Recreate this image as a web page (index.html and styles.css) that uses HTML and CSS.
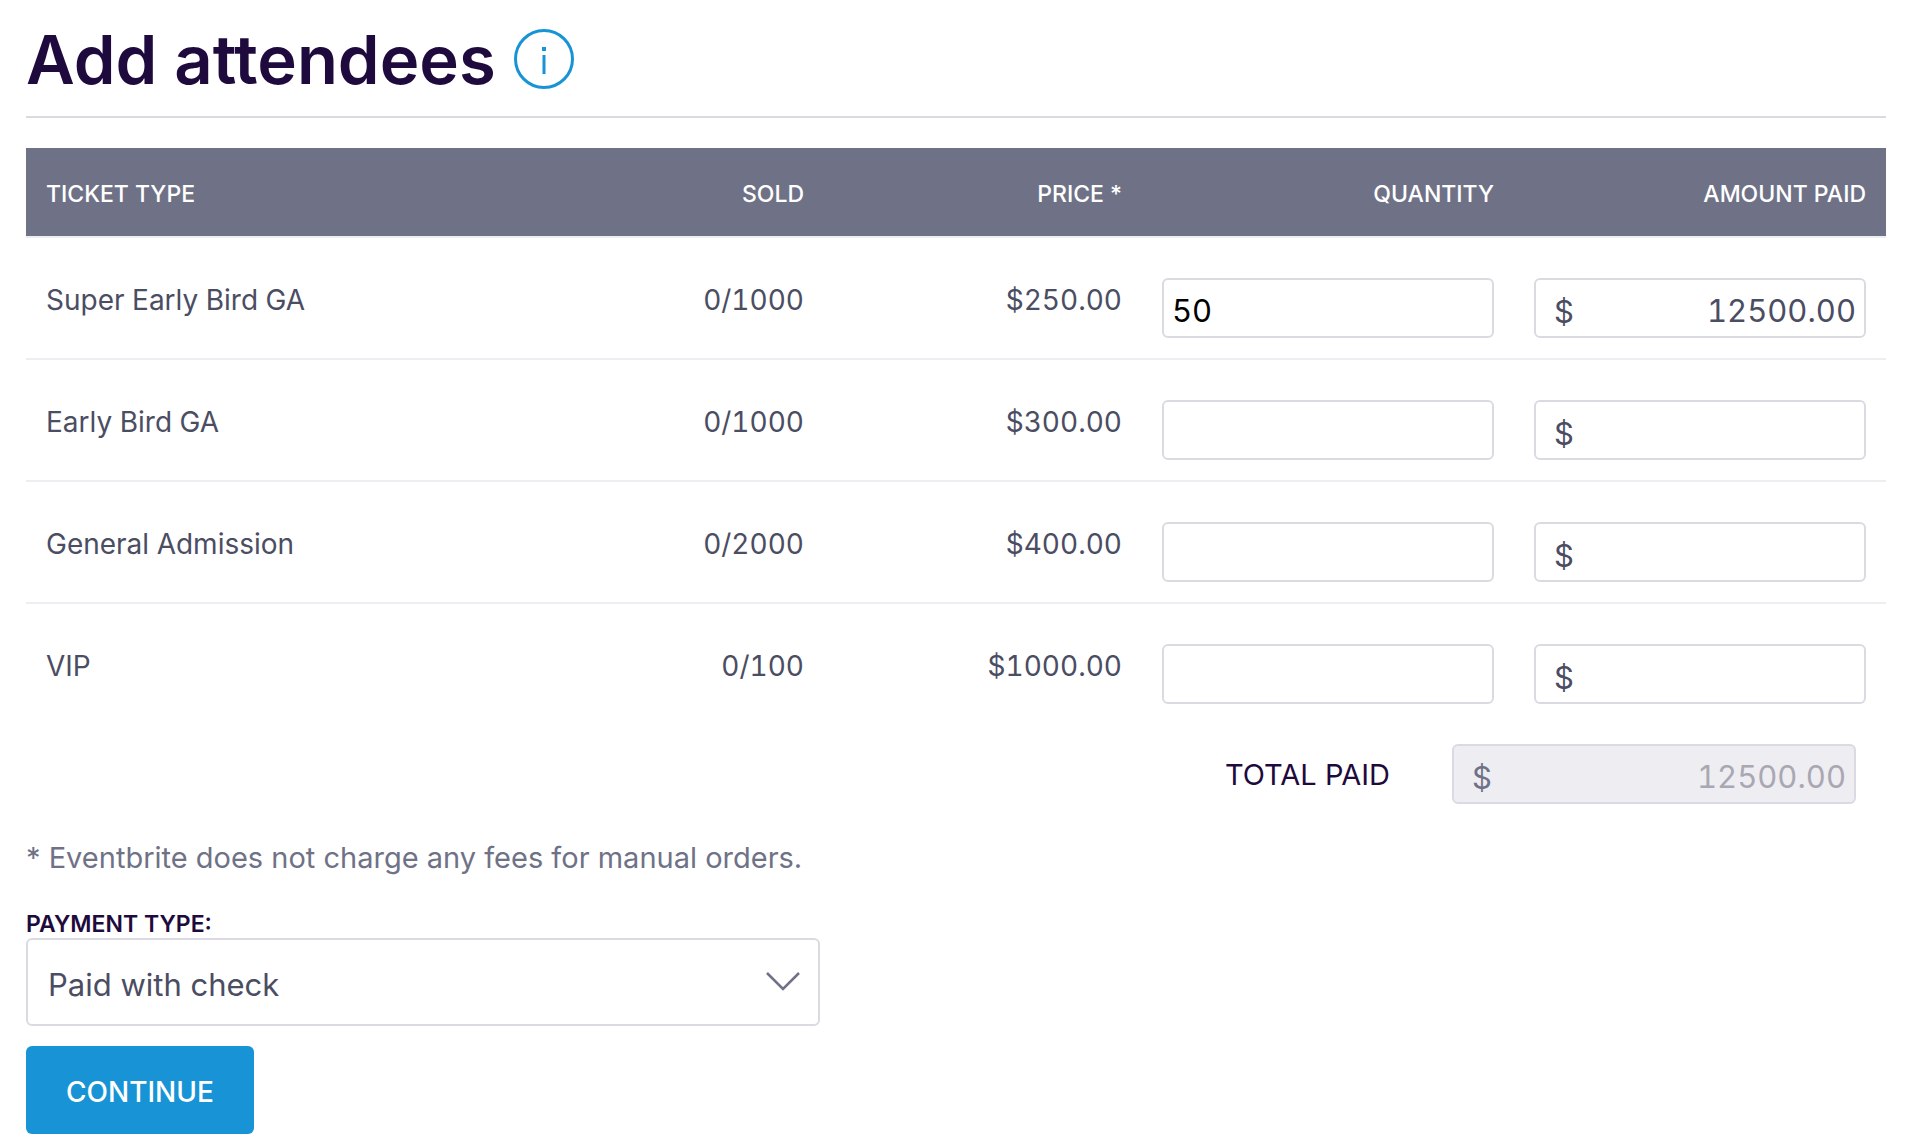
FILE: index.html
```html
<!DOCTYPE html>
<html lang="en">
  <head>
    <meta charset="utf-8">
    <title>Add attendees</title>
    <link rel="stylesheet" href="styles.css">
  </head>
  <body>
    <form class="attendees">
      <header class="page-header">
        <h1>Add attendees</h1>
        <button type="button" class="info" aria-label="More information">
          <svg viewBox="0 0 60 60" width="60" height="60">
            <circle cx="30" cy="30" r="28.5" fill="none" stroke="currentColor" stroke-width="3"></circle>
            <rect x="28" y="18" width="4" height="4" fill="currentColor"></rect>
            <rect x="28.5" y="26" width="3" height="19" fill="currentColor"></rect>
          </svg>
        </button>
      </header>

      <table class="tickets">
        <colgroup>
          <col>
          <col class="col-sold">
          <col class="col-price">
          <col class="col-field">
          <col class="col-field">
        </colgroup>
        <thead>
          <tr>
            <th>TICKET TYPE</th>
            <th>SOLD</th>
            <th>PRICE *</th>
            <th>QUANTITY</th>
            <th>AMOUNT PAID</th>
          </tr>
        </thead>
        <tbody>
          <tr>
            <td>Super Early Bird GA</td>
            <td>0/1000</td>
            <td>$250.00</td>
            <td><input class="field" type="text" value="50" aria-label="Super Early Bird GA quantity"></td>
            <td>
              <div class="money">
                <label for="paid-super">$</label>
                <input class="field" id="paid-super" type="text" value="12500.00">
              </div>
            </td>
          </tr>
          <tr>
            <td>Early Bird GA</td>
            <td>0/1000</td>
            <td>$300.00</td>
            <td><input class="field" type="text" aria-label="Early Bird GA quantity"></td>
            <td>
              <div class="money">
                <label for="paid-early">$</label>
                <input class="field" id="paid-early" type="text">
              </div>
            </td>
          </tr>
          <tr>
            <td>General Admission</td>
            <td>0/2000</td>
            <td>$400.00</td>
            <td><input class="field" type="text" aria-label="General Admission quantity"></td>
            <td>
              <div class="money">
                <label for="paid-general">$</label>
                <input class="field" id="paid-general" type="text">
              </div>
            </td>
          </tr>
          <tr>
            <td>VIP</td>
            <td>0/100</td>
            <td>$1000.00</td>
            <td><input class="field" type="text" aria-label="VIP quantity"></td>
            <td>
              <div class="money">
                <label for="paid-vip">$</label>
                <input class="field" id="paid-vip" type="text">
              </div>
            </td>
          </tr>
        </tbody>
      </table>

      <div class="total">
        <label class="total-label" for="total-paid">TOTAL PAID</label>
        <div class="money">
          <label for="total-paid">$</label>
          <input class="field" id="total-paid" type="text" value="12500.00" disabled>
        </div>
      </div>

      <p class="note">* Eventbrite does not charge any fees for manual orders.</p>

      <label class="payment-label" for="payment-type">PAYMENT TYPE:</label>
      <div class="select">
        <select id="payment-type">
          <option>Paid with check</option>
          <option>Paid with cash</option>
          <option>Other</option>
        </select>
        <svg class="chevron" viewBox="0 0 34 20" width="34" height="20">
          <path d="M1 1 L17 17 L33 1" fill="none" stroke="currentColor" stroke-width="2.5"></path>
        </svg>
      </div>

      <button type="submit" class="continue">CONTINUE</button>
    </form>
  </body>
</html>
```
FILE: styles.css
```css
* {
  box-sizing: border-box;
}
body {
  margin: 0;
  background-color: #fff;
  color: #4b4d63;
  font-family: Inter, "Liberation Sans", sans-serif;
  font-size: 28px;
}
input, select, button {
  font-family: inherit;
}
td, .field {
  font-variant-numeric: tabular-nums;
}
.attendees {
  padding: 0 22px 12px 26px;
}
.page-header {
  display: flex;
  align-items: center;
  gap: 18px;
  height: 118px;
  margin-bottom: 30px;
  padding-top: 2px;
  border-bottom: 2px solid #dbdae3;
}
h1 {
  margin: 0;
  color: #1e0a3c;
  font-size: 67px;
  font-weight: 600;
}
.info {
  padding: 0;
  border: 0;
  background: none;
  color: #1894d6;
}
.info svg {
  display: block;
}

/* ticket table */
.tickets {
  width: 100%;
  border-collapse: separate;
  border-spacing: 0;
  table-layout: fixed;
}
.col-sold {
  width: 15%;
}
.col-price {
  width: 318px;
}
.col-field {
  width: 20%;
}
th {
  height: 90px;
  padding: 4px 20px 0;
  border-bottom: 2px solid #eeedf2;
  background-color: #6f7287;
  background-clip: padding-box;
  color: #fff;
  font-size: 23px;
  font-weight: 500;
  text-align: right;
}
td {
  padding: 40px 20px 20px;
  border-bottom: 2px solid #eeedf2;
  line-height: 44px;
  text-align: right;
  vertical-align: top;
}
th:first-child,
td:first-child {
  text-align: left;
}
tbody tr:last-child td {
  border-bottom: 0;
}

.field {
  display: block;
  width: 100%;
  height: 60px;
  padding: 4px 8px 0;
  border: 2px solid #dbdae3;
  border-radius: 6px;
  background-color: #fff;
  color: #000;
  font-size: 31px;
}
.money {
  position: relative;
}
.money label {
  position: absolute;
  top: 4px;
  left: 20px;
  color: #4b4d63;
  font-size: 31px;
  line-height: 60px;
}
.money .field {
  color: #4b4d63;
  text-align: right;
}

.total {
  display: flex;
  align-items: center;
  justify-content: flex-end;
  gap: 62px;
  padding: 20px 30px 0;
}
.total .money {
  width: 404px;
}
.total .money label {
  color: #6f7287;
}
.total .field {
  background-color: #eeedf2;
  color: #a9a8b2;
}
.total-label {
  color: #1e0a3c;
  font-size: 29px;
}

.note {
  margin: 34px 0 32px;
  color: #6f7287;
  font-size: 29px;
  line-height: 40px;
}
.payment-label {
  display: block;
  color: #1e0a3c;
  font-size: 23px;
  font-weight: 600;
  line-height: 28px;
}
.select {
  position: relative;
  max-width: 794px;
  margin-bottom: 20px;
}
select {
  display: block;
  width: 100%;
  height: 88px;
  padding: 4px 60px 0 20px;
  border: 2px solid #dbdae3;
  border-radius: 6px;
  background-color: #fff;
  color: #4b4d63;
  font-size: 31px;
  appearance: none;
}
.chevron {
  position: absolute;
  top: 34px;
  right: 20px;
  color: #6f7287;
  pointer-events: none;
}
.continue {
  display: block;
  height: 88px;
  padding: 4px 40px 0;
  border: 0;
  border-radius: 6px;
  background-color: #1894d6;
  color: #fff;
  font-size: 28px;
  font-weight: 500;
}
```
